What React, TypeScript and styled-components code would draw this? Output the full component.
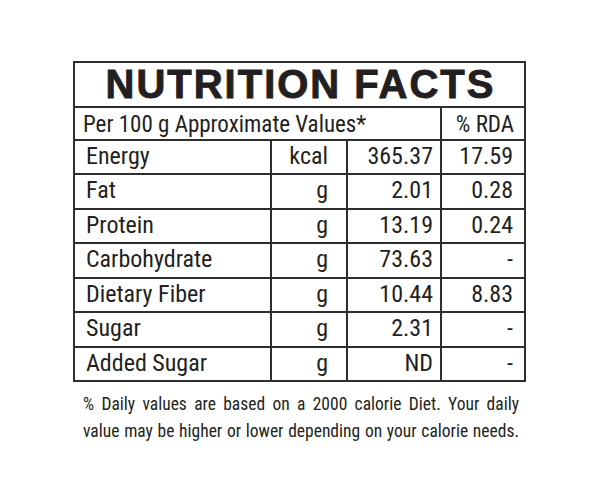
import React from "react";
import styled, { createGlobalStyle } from "styled-components";

const Global = createGlobalStyle`
  html, body { margin: 0; padding: 0; background: #ffffff; }
  body { font-family: Roboto, "Liberation Sans", sans-serif; font-stretch: 75%; color: #231f20; }
`;

const Page = styled.div`
  width: 600px;
  height: 500px;
  padding: 61px 0 0 73px;
  box-sizing: border-box;
`;

const Panel = styled.div`
  width: 453px;
  display: flex;
  flex-direction: column;
`;

const Table = styled.div`
  display: grid;
  grid-template-columns: 195px 74px 92px 82px;
  grid-template-rows: 43px 31px 32px 33px 32px 33px 32px 33px 32px;
  gap: 2px;
  border: 2px solid #2e2e2e;
  background: #2e2e2e;
`;

const Title = styled.div`
  grid-column: 1 / span 4;
  background: #fff;
  text-align: center;
  font-family: "Liberation Sans", Arial, sans-serif;
  font-stretch: normal;
  font-size: 40px;
  line-height: 43px;
  font-weight: 700;
  letter-spacing: 2px;
  padding-left: 2px;
  -webkit-text-stroke: 0.9px #231f20;
  color: #231f20;
`;

const HeadCell = styled.div<{ $span?: number; $right?: boolean }>`
  grid-column: ${(p) => (p.$span ? `span ${p.$span}` : "auto")};
  background: #fff;
  font-size: 23px;
  line-height: 24px;
  padding: 5px ${(p) => (p.$right ? "10px" : "0")} 0 ${(p) => (p.$right ? "0" : "8px")};
  text-align: ${(p) => (p.$right ? "right" : "left")};
  white-space: nowrap;
`;

const Cell = styled.div<{ $align: "left" | "right"; $pad: number }>`
  background: #fff;
  font-size: 24px;
  line-height: 26px;
  padding-top: 2px;
  text-align: ${(p) => p.$align};
  ${(p) => (p.$align === "left" ? `padding-left: ${p.$pad}px;` : `padding-right: ${p.$pad}px;`)}
  white-space: nowrap;
`;

const Note = styled.p`
  margin: 9px 0 0 10px;
  width: 436px;
  font-size: 17.5px;
  line-height: 27px;
  text-align: justify;
  text-align-last: justify;
  color: #231f20;
`;

const rows: [string, string, string, string][] = [
  ["Energy", "kcal", "365.37", "17.59"],
  ["Fat", "g", "2.01", "0.28"],
  ["Protein", "g", "13.19", "0.24"],
  ["Carbohydrate", "g", "73.63", "-"],
  ["Dietary Fiber", "g", "10.44", "8.83"],
  ["Sugar", "g", "2.31", "-"],
  ["Added Sugar", "g", "ND", "-"],
];

export default function App() {
  return (
    <Page>
      <Global />
      <Panel>
        <Table>
          <Title>NUTRITION FACTS</Title>
          <HeadCell $span={3}>Per 100 g Approximate Values*</HeadCell>
          <HeadCell $right>% RDA</HeadCell>
          {rows.map(([name, unit, value, rda]) => (
            <React.Fragment key={name}>
              <Cell $align="left" $pad={11}>{name}</Cell>
              <Cell $align="right" $pad={18}>{unit}</Cell>
              <Cell $align="right" $pad={7}>{value}</Cell>
              <Cell $align="right" $pad={11}>{rda}</Cell>
            </React.Fragment>
          ))}
        </Table>
        <Note>
          % Daily values are based on a 2000 calorie Diet. Your daily
          <br />
          value may be higher or lower depending on your calorie needs.
        </Note>
      </Panel>
    </Page>
  );
}
